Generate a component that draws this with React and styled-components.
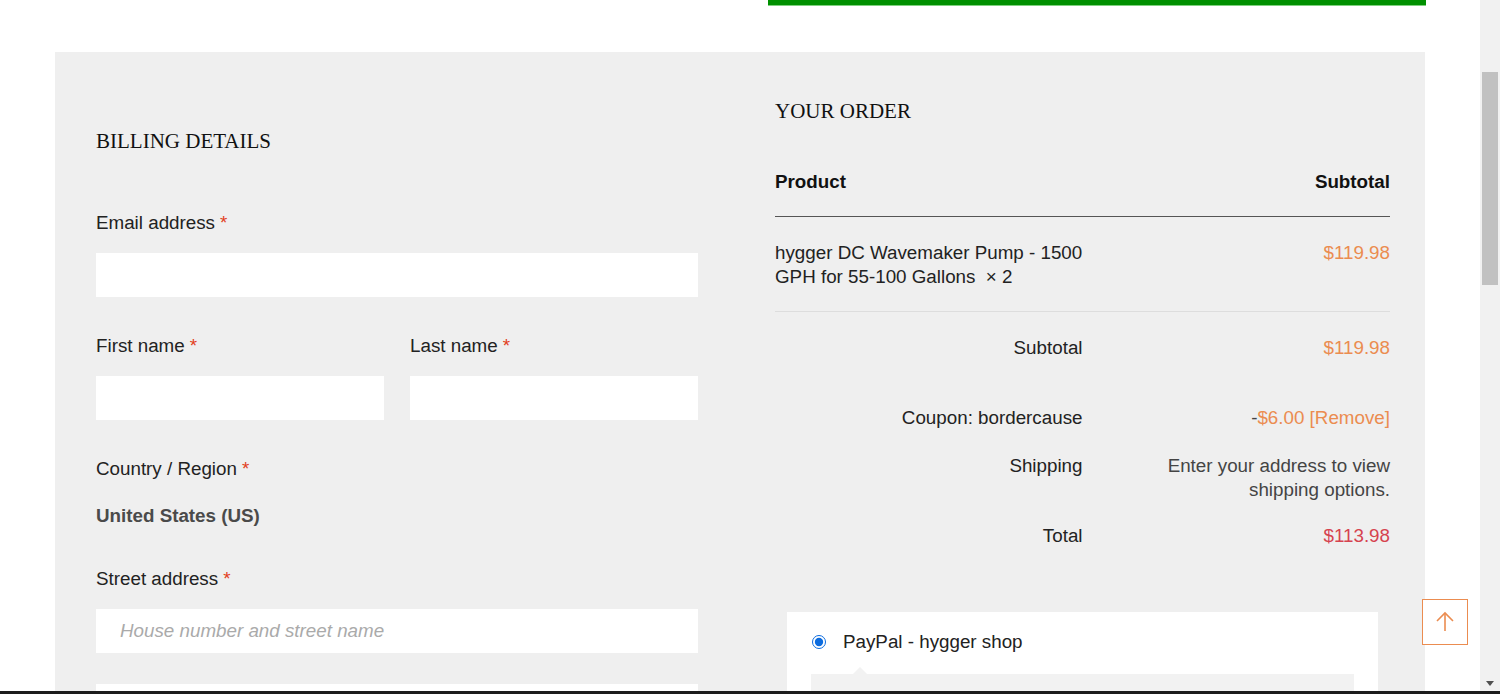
import React from 'react'
import styled, { createGlobalStyle } from 'styled-components'

const GlobalStyle = createGlobalStyle`
  html, body {
    margin: 0;
    padding: 0;
    background: #fff;
  }
  #root {
    height: 694px;
    overflow: hidden;
  }
  * { box-sizing: border-box; }
`

const Page = styled.div`
  display: flex;
  height: 694px;
  font-family: 'Liberation Sans', Arial, sans-serif;
  font-size: 18.8px;
  line-height: 24px;
  color: #222;
`

const Main = styled.div`
  flex: 1;
  display: flex;
  flex-direction: column;
  background: #fff;
  min-height: 0;
`

const TopStrip = styled.div`
  flex-shrink: 0;
  height: 52px;
  padding-left: 768px;
`

const GreenBar = styled.div`
  width: 658px;
  height: 5px;
  background: #009000;
  box-shadow: 0 1px 0 #7fd07f;
`

const Panel = styled.div`
  margin-left: 55px;
  width: 1370px;
  flex: 1;
  min-height: 0;
  overflow: hidden;
  background: #efefef;
  padding: 0 35px 0 41px;
  display: grid;
  grid-template-columns: 602px 615px;
  column-gap: 77px;
  align-items: start;
`

const Column = styled.div`
  padding-top: ${p => p.top}px;
`

const Heading = styled.h3`
  margin: 0;
  font-family: 'Liberation Serif', 'Times New Roman', serif;
  font-weight: 400;
  font-size: 21px;
  line-height: 24px;
  color: #111;
  margin-bottom: ${p => p.gap}px;
`

const Field = styled.div`
  margin-bottom: ${p => p.gap ?? 37}px;
`

const FieldRow = styled.div`
  display: grid;
  grid-template-columns: 1fr 1fr;
  column-gap: 26px;
`

const Label = styled.label`
  display: block;
  margin-bottom: ${p => p.gap ?? 18}px;
  color: #222;
`

const Req = styled.span`
  color: #e2401c;
  margin-left: 5px;
`

const Input = styled.input`
  display: block;
  width: 100%;
  height: 44px;
  border: none;
  background: #fff;
  padding: 0 24px;
  font-family: inherit;
  font-size: 18.8px;
  margin-bottom: ${p => p.gap ?? 0}px;
  &::placeholder {
    color: #aaa;
    font-style: italic;
  }
`

const Country = styled.div`
  font-weight: 700;
  color: #4a4a4a;
`

const Table = styled.div`
  display: flex;
  flex-direction: column;
`

const HeadRow = styled.div`
  display: flex;
  justify-content: space-between;
  font-weight: 700;
  color: #111;
  padding: 0 0 22px;
  border-bottom: 1px solid #555;
`

const ItemRow = styled.div`
  display: flex;
  justify-content: space-between;
  padding: 24px 0 22px;
  border-bottom: 1px solid #ddd;
`

const ItemName = styled.div`
  width: 330px;
  color: #222;
`

const Price = styled.span`
  color: ${p => (p.red ? '#d6434f' : '#eb8c50')};
`

const Totals = styled.div`
  display: flex;
  flex-direction: column;
  padding-top: 12px;
`

const TotalRow = styled.div`
  display: grid;
  grid-template-columns: 1fr 1fr;
  padding: 12px 0 ${p => p.bottom ?? 12}px;
  margin-bottom: ${p => p.gap ?? 0}px;
`

const TotalLabel = styled.div`
  text-align: right;
  color: #222;
`

const TotalValue = styled.div`
  text-align: right;
  padding-left: 30px;
  color: #444;
`

const PaymentBox = styled.div`
  margin: 52px 12px 0;
  background: #fff;
  padding: 18px 24px 0 24px;
`

const Method = styled.label`
  display: flex;
  align-items: center;
  gap: 17px;
  color: #222;
`

const Radio = styled.input`
  margin: 0 0 0 1px;
  width: 14px;
  height: 14px;
  accent-color: #0b6bde;
`

const MethodBox = styled.div`
  position: relative;
  margin-top: 20px;
  height: 30px;
  background: #f2f2f2;
  &::before {
    content: '';
    position: absolute;
    left: 42px;
    top: -14px;
    border: 7px solid transparent;
    border-bottom-color: #f2f2f2;
  }
`

const ToTop = styled.button`
  position: absolute;
  left: 1422px;
  top: 599px;
  width: 46px;
  height: 46px;
  border: 1px solid #eb8c50;
  background: #fff;
  display: flex;
  align-items: center;
  justify-content: center;
  padding: 0;
`

const Scrollbar = styled.div`
  width: 20px;
  background: #f1f1f1;
  display: flex;
  flex-direction: column;
  padding: 72px 2px 0 2px;
`

const Thumb = styled.div`
  height: 213px;
  background: #c1c1c1;
`

const ArrowDown = styled.div`
  margin-top: auto;
  margin-bottom: 8px;
  align-self: center;
  border: 4px solid transparent;
  border-top: 5px solid #505050;
  border-bottom: none;
`

const BottomEdge = styled.div`
  position: fixed;
  left: 0;
  right: 0;
  bottom: 0;
  height: 3px;
  background: #1c1c1c;
`

export default function App() {
  return (
    <Page>
      <GlobalStyle />
      <Main>
        <TopStrip>
          <GreenBar />
        </TopStrip>
        <Panel>
          <Column top={77}>
            <Heading gap={58}>BILLING DETAILS</Heading>
            <Field>
              <Label>Email address<Req>*</Req></Label>
              <Input type="email" />
            </Field>
            <FieldRow>
              <Field>
                <Label>First name<Req>*</Req></Label>
                <Input />
              </Field>
              <Field>
                <Label>Last name<Req>*</Req></Label>
                <Input />
              </Field>
            </FieldRow>
            <Field gap={39}>
              <Label gap={23}>Country / Region<Req>*</Req></Label>
              <Country>United States (US)</Country>
            </Field>
            <Field>
              <Label>Street address<Req>*</Req></Label>
              <Input gap={31} placeholder="House number and street name" />
              <Input />
            </Field>
          </Column>
          <Column top={47}>
            <Heading gap={47}>YOUR ORDER</Heading>
            <Table>
              <HeadRow>
                <span>Product</span>
                <span>Subtotal</span>
              </HeadRow>
              <ItemRow>
                <ItemName>hygger DC Wavemaker Pump - 1500 GPH for 55-100 Gallons&nbsp; × 2</ItemName>
                <Price>$119.98</Price>
              </ItemRow>
              <Totals>
                <TotalRow gap={22}>
                  <TotalLabel>Subtotal</TotalLabel>
                  <TotalValue><Price>$119.98</Price></TotalValue>
                </TotalRow>
                <TotalRow>
                  <TotalLabel>Coupon: bordercause</TotalLabel>
                  <TotalValue>-<Price>$6.00 [Remove]</Price></TotalValue>
                </TotalRow>
                <TotalRow bottom={10}>
                  <TotalLabel>Shipping</TotalLabel>
                  <TotalValue>Enter your address to view shipping options.</TotalValue>
                </TotalRow>
                <TotalRow>
                  <TotalLabel>Total</TotalLabel>
                  <TotalValue><Price red>$113.98</Price></TotalValue>
                </TotalRow>
              </Totals>
            </Table>
            <PaymentBox>
              <Method>
                <Radio type="radio" defaultChecked name="pay" />
                PayPal - hygger shop
              </Method>
              <MethodBox />
            </PaymentBox>
          </Column>
        </Panel>
      </Main>
      <Scrollbar>
        <Thumb />
        <ArrowDown />
      </Scrollbar>
      <ToTop aria-label="Back to top">
        <svg width="22" height="22" viewBox="0 0 22 22" fill="none" stroke="#eb8c50" strokeWidth="1.6">
          <path d="M11 20V2" />
          <path d="M3 10l8-8 8 8" />
        </svg>
      </ToTop>
      <BottomEdge />
    </Page>
  )
}
